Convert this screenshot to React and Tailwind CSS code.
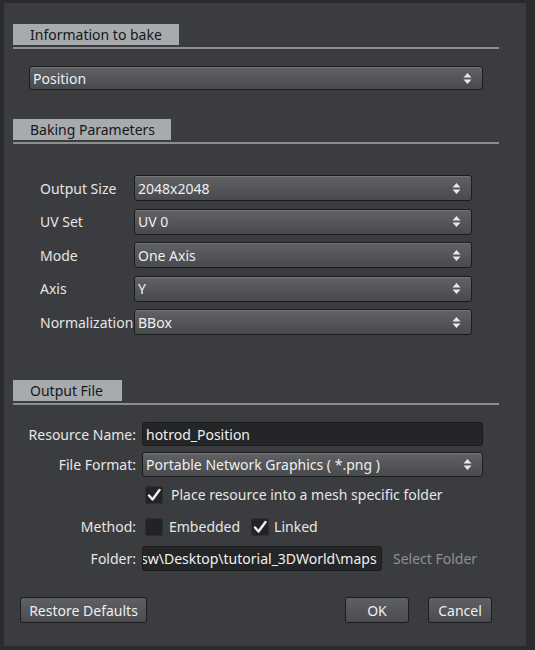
import React from "react";

const font = { fontFamily: '"Noto Sans", "Open Sans", Arial, sans-serif' };

function Arrows() {
  return (
    <svg width="9" height="13" viewBox="0 0 9 13" className="shrink-0">
      <path d="M4.5 1 L8.5 5.5 L0.5 5.5 Z" fill="#e8e8e8" />
      <path d="M4.5 12 L8.5 7.5 L0.5 7.5 Z" fill="#e8e8e8" />
    </svg>
  );
}

function Select({ value, className = "" }) {
  return (
    <div
      className={`flex items-center justify-between rounded-[3px] border border-[#1b1c1e] bg-gradient-to-b from-[#606265] to-[#484a4d] pl-[3px] pr-[10px] text-[14px] text-[#efefef] shadow-[inset_0_1px_0_rgba(255,255,255,0.12)] ${className}`}
    >
      <span>{value}</span>
      <Arrows />
    </div>
  );
}

function Check({ checked }) {
  return (
    <div className="flex h-[18px] w-[18px] items-center justify-center rounded-[3px] bg-[#222325] shadow-[inset_0_0_0_1px_#2e2f31]">
      {checked && (
        <svg width="14" height="14" viewBox="0 0 14 14">
          <path
            d="M2 7.5 L5.5 11.5 L12.5 2"
            fill="none"
            stroke="#f2f2f2"
            strokeWidth="2.4"
            strokeLinecap="round"
            strokeLinejoin="round"
          />
        </svg>
      )}
    </div>
  );
}

function Section({ title, tabWidth }) {
  return (
    <div className="flex flex-col">
      <div
        className="flex h-[21px] items-center bg-[#a8abae] pl-[17px] text-[14px] text-[#16171a]"
        style={{ width: tabWidth }}
      >
        {title}
      </div>
      <div className="mt-[2px] h-[2px] w-[486px] bg-[#8b8d90]" />
    </div>
  );
}

function Button({ children, className = "" }) {
  return (
    <div
      className={`flex h-[26px] items-center justify-center rounded-[3px] border border-[#1b1c1e] bg-gradient-to-b from-[#5e6063] to-[#4a4c4f] text-[14px] text-[#efefef] ${className}`}
    >
      {children}
    </div>
  );
}

export default function App() {
  const params = [
    ["Output Size", "2048x2048"],
    ["UV Set", "UV 0"],
    ["Mode", "One Axis"],
    ["Axis", "Y"],
    ["Normalization", "BBox"],
  ];

  return (
    <div className="h-[650px] w-[535px] bg-[#2a2b2d] pl-[4px] pt-[3px]" style={font}>
      <div className="flex h-[643px] w-[522px] flex-col bg-[#3b3c3f] pl-[9px] pt-[21px] text-[#e6e6e6]">
        <Section title="Information to bake" tabWidth={166} />
        <div className="mt-[17px] pl-[16px]">
          <Select value="Position" className="h-[24px] w-[454px]" />
        </div>

        <div className="mt-[29px]">
          <Section title="Baking Parameters" tabWidth={158} />
        </div>
        <div className="mt-[31px] flex flex-col gap-[7.5px] pl-[27px]">
          {params.map(([label, value]) => (
            <div key={label} className="flex items-center">
              <span className="w-[94px] text-[14px]">{label}</span>
              <Select value={value} className="h-[26px] w-[338px]" />
            </div>
          ))}
        </div>

        <div className="mt-[45px]">
          <Section title="Output File" tabWidth={109} />
        </div>

        <div className="mt-[17px] flex flex-col">
          <div className="flex items-center">
            <span className="w-[123px] text-right text-[14px]">Resource Name:</span>
            <div className="ml-[6px] flex h-[24px] w-[341px] items-center rounded-[3px] border border-[#1a1b1d] bg-[#242527] pl-[3px] text-[14px] text-[#efefef]">
              hotrod_Position
            </div>
          </div>
          <div className="mt-[6px] flex items-center">
            <span className="w-[123px] text-right text-[14px]">File Format:</span>
            <Select
              value="Portable Network Graphics ( *.png )"
              className="ml-[6px] h-[25px] w-[341px]"
            />
          </div>
          <div className="mt-[7px] flex items-center pl-[132px]">
            <Check checked />
            <span className="ml-[8px] text-[14px]">Place resource into a mesh specific folder</span>
          </div>
          <div className="mt-[11px] flex items-center">
            <span className="w-[123px] text-right text-[14px]">Method:</span>
            <div className="ml-[9px] flex items-center">
              <Check />
              <span className="ml-[6px] text-[14px]">Embedded</span>
              <div className="ml-[11px]">
                <Check checked />
              </div>
              <span className="ml-[5px] text-[14px]">Linked</span>
            </div>
          </div>
          <div className="mt-[9px] flex items-center">
            <span className="w-[123px] text-right text-[14px]">Folder:</span>
            <div className="ml-[6px] flex h-[25px] w-[240px] items-center overflow-hidden whitespace-nowrap rounded-[3px] border border-[#1a1b1d] bg-[#242527] text-[14px] text-[#efefef]">
              <span className="-ml-[2px]">sw\Desktop\tutorial_3DWorld\maps</span>
            </div>
            <span className="ml-[11px] text-[14px] text-[#8e9093]">Select Folder</span>
          </div>
        </div>

        <div className="mt-[26px] flex items-center pl-[7px]">
          <Button className="w-[127px]">Restore Defaults</Button>
          <Button className="ml-[198px] w-[64px]">OK</Button>
          <Button className="ml-[19px] w-[64px]">Cancel</Button>
        </div>
      </div>
    </div>
  );
}
